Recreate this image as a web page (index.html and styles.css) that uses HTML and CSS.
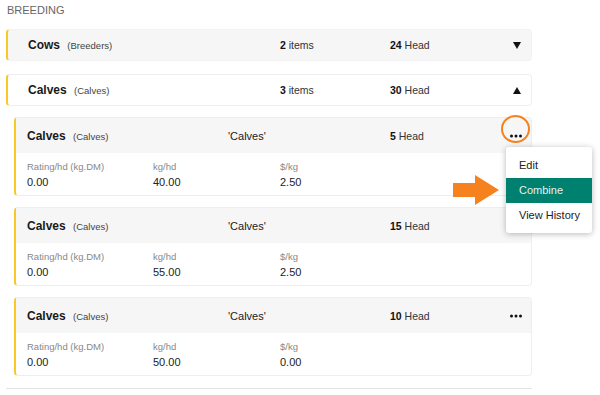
FILE: index.html
```html
<!DOCTYPE html>
<html>
<head>
<title>Breeding</title>
<link rel="stylesheet" href="styles.css">
</head>
<body>

<div class="page">
  <div class="title">BREEDING</div>

  <div class="group shaded">
    <div class="name">Cows <span class="sub">(Breeders)</span></div>
    <div class="num"><b>2</b> items</div>
    <div class="num"><b>24</b> Head</div>
    <svg class="caret" width="8" height="7" viewBox="0 0 8 7"><polygon points="0,0 8,0 4,7" fill="#111"/></svg>
  </div>

  <div class="group">
    <div class="name">Calves <span class="sub">(Calves)</span></div>
    <div class="num"><b>3</b> items</div>
    <div class="num"><b>30</b> Head</div>
    <svg class="caret" width="8" height="7" viewBox="0 0 8 7"><polygon points="0,7 8,7 4,0" fill="#111"/></svg>
  </div>

  <div class="card">
    <div class="card-head">
      <div class="name">Calves <span class="sub">(Calves)</span></div>
      <div class="tag">'Calves'</div>
      <div class="num"><b>5</b> Head</div>
      <svg class="dots" width="12" height="4" viewBox="0 0 12 4"><circle cx="1.5" cy="2" r="1.5"/><circle cx="6" cy="2" r="1.5"/><circle cx="10.5" cy="2" r="1.5"/></svg>
    </div>
    <div class="card-body">
      <div class="cell"><div class="label">Rating/hd (kg.DM)</div><div class="value">0.00</div></div>
      <div class="cell"><div class="label">kg/hd</div><div class="value">40.00</div></div>
      <div class="cell"><div class="label">$/kg</div><div class="value">2.50</div></div>
    </div>

    <div class="ring"></div>
    <svg class="pointer" width="50" height="32" viewBox="0 0 50 32"><polygon points="0,8 22,8 22,0 46,15 22,30 22,22 0,22" fill="#f5821f"/></svg>
    <div class="menu">
      <div class="menu-item">Edit</div>
      <div class="menu-item active">Combine</div>
      <div class="menu-item">View History</div>
    </div>
  </div>

  <div class="card">
    <div class="card-head">
      <div class="name">Calves <span class="sub">(Calves)</span></div>
      <div class="tag">'Calves'</div>
      <div class="num"><b>15</b> Head</div>
      <svg class="dots" width="12" height="4" viewBox="0 0 12 4"><circle cx="1.5" cy="2" r="1.5"/><circle cx="6" cy="2" r="1.5"/><circle cx="10.5" cy="2" r="1.5"/></svg>
    </div>
    <div class="card-body">
      <div class="cell"><div class="label">Rating/hd (kg.DM)</div><div class="value">0.00</div></div>
      <div class="cell"><div class="label">kg/hd</div><div class="value">55.00</div></div>
      <div class="cell"><div class="label">$/kg</div><div class="value">2.50</div></div>
    </div>
  </div>

  <div class="card">
    <div class="card-head">
      <div class="name">Calves <span class="sub">(Calves)</span></div>
      <div class="tag">'Calves'</div>
      <div class="num"><b>10</b> Head</div>
      <svg class="dots" width="12" height="4" viewBox="0 0 12 4"><circle cx="1.5" cy="2" r="1.5"/><circle cx="6" cy="2" r="1.5"/><circle cx="10.5" cy="2" r="1.5"/></svg>
    </div>
    <div class="card-body">
      <div class="cell"><div class="label">Rating/hd (kg.DM)</div><div class="value">0.00</div></div>
      <div class="cell"><div class="label">kg/hd</div><div class="value">50.00</div></div>
      <div class="cell"><div class="label">$/kg</div><div class="value">0.00</div></div>
    </div>
  </div>

  <div class="divider"></div>
</div>

</body>
</html>
```

FILE: styles.css
```css
body {
  margin: 0;
  background-color: white;
  font-family: "Liberation Sans", Arial, sans-serif;
  color: #222;
}

.page {
  width: 526px;
  padding-left: 6px;
}

.title {
  font-size: 11px;
  line-height: 13px;
  color: #666;
  padding: 4px 0 0 1px;
  margin-bottom: 12px;
}

.group {
  box-sizing: border-box;
  height: 32px;
  display: grid;
  grid-template-columns: 252px 110px 1fr auto;
  align-items: center;
  padding: 0 10px 0 20px;
  border: 1px solid #eee;
  border-left: 2px solid #f7c826;
  border-radius: 4px;
  margin-bottom: 11px;
  background: white;
}

.group.shaded {
  background: #f6f6f6;
  border-color: #f2f2f2;
  border-left-color: #f7c826;
  margin-bottom: 13px;
}

.name {
  font-size: 12px;
  font-weight: bold;
  color: #1a1a1a;
}

.sub {
  font-size: 9.5px;
  font-weight: normal;
  color: #444;
  margin-left: 4px;
}

.num {
  font-size: 10.5px;
  color: #333;
}

.num b {
  color: #111;
}

.caret {
  display: block;
}

.card {
  position: relative;
  margin: 0 0 11px 8px;
  border: 1px solid #eee;
  border-left: 2px solid #f7c826;
  border-radius: 4px;
  background: white;
}

.card-head {
  box-sizing: border-box;
  height: 35px;
  display: grid;
  grid-template-columns: 201px 162px 1fr auto;
  align-items: center;
  padding: 0 9px 0 11px;
  background: #f6f6f6;
}

.tag {
  font-size: 11px;
  color: #222;
}

.dots {
  display: block;
  fill: #111;
}

.card-body {
  box-sizing: border-box;
  height: 42px;
  display: grid;
  grid-template-columns: 126px 127px 1fr;
  padding: 8px 0 0 11px;
}

.label {
  font-size: 9.5px;
  line-height: 12px;
  color: #888;
  margin-bottom: 3px;
}

.value {
  font-size: 11px;
  line-height: 13px;
  color: #222;
}

.ring {
  position: absolute;
  left: 485px;
  top: -3px;
  width: 25px;
  height: 24px;
  border: 2.5px solid #f5821f;
  border-radius: 50%;
}

.pointer {
  position: absolute;
  left: 437px;
  top: 57px;
}

.menu {
  position: absolute;
  left: 490px;
  top: 29px;
  width: 86px;
  padding: 6px 0 5px;
  background: white;
  border-radius: 3px;
  box-shadow: 0 1px 6px rgba(0, 0, 0, 0.28);
  z-index: 2;
}

.menu-item {
  height: 25px;
  line-height: 25px;
  padding-left: 13px;
  font-size: 11px;
  color: #222;
}

.menu-item.active {
  background: #00806e;
  color: #e6f2ef;
}

.divider {
  border-top: 1px solid #e3e3e3;
  margin-top: 12px;
}
```
